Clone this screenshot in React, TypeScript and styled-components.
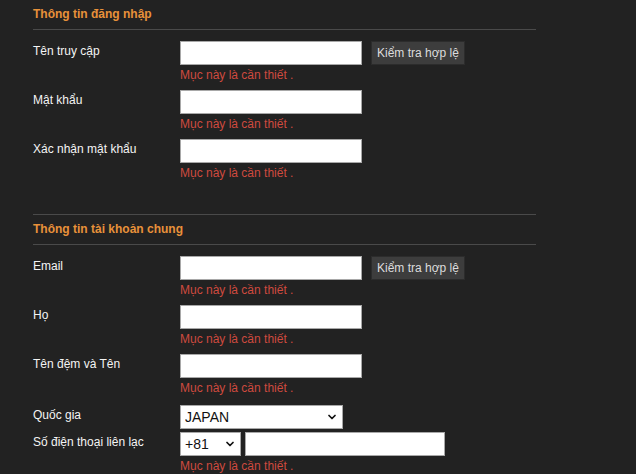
import React from 'react'
import styled, { createGlobalStyle } from 'styled-components'
import { ChevronDown } from 'lucide-react'

const GlobalStyle = createGlobalStyle`
  html, body {
    margin: 0;
    padding: 0;
    background: #222222;
  }
  body {
    font-family: "Liberation Sans", Arial, sans-serif;
    font-size: 12px;
    color: #f0f0f0;
  }
`

const Page = styled.div`
  min-height: 474px;
  padding: 0 0 0 33px;
  background: #222222;
`

const Form = styled.div`
  width: 503px;
`

const Section = styled.section<{ $first?: boolean }>`
  border-top: ${p => (p.$first ? 'none' : '1px solid #4a4a4a')};
  margin-bottom: 33px;
`

const SectionTitle = styled.h3`
  margin: 0;
  padding: 6px 0 7px;
  line-height: 16px;
  font-size: 12px;
  font-weight: bold;
  color: #e8913a;
  border-bottom: 1px solid #4a4a4a;
`

const Rows = styled.div`
  padding-top: 11px;
`

const Row = styled.div<{ $tight?: boolean }>`
  display: grid;
  grid-template-columns: 147px 1fr;
  padding-top: ${p => (p.$tight ? '2px' : '0')};
  margin-bottom: ${p => (p.$tight ? '3px' : '7px')};
`

const Label = styled.label`
  padding-top: 2px;
  line-height: 16px;
  color: #f4f4f4;
`

const Field = styled.div`
  display: flex;
  flex-direction: column;
`

const Line = styled.div`
  display: flex;
  align-items: center;
  gap: 9px;
`

const TextInput = styled.input<{ $w?: number }>`
  box-sizing: border-box;
  width: ${p => p.$w ?? 182}px;
  height: 24px;
  margin: 0;
  border: 1px solid #a8a8a8;
  background: #ffffff;
  font: 13px "Liberation Sans", Arial, sans-serif;
  padding: 0 4px;
  outline: none;
`

const CheckButton = styled.button`
  box-sizing: border-box;
  height: 24px;
  padding: 0 5px;
  border: 1px solid #2c2c2c;
  background: #3d3d3d;
  color: #dcdcdc;
  font: 12px "Liberation Sans", Arial, sans-serif;
  cursor: pointer;
`

const Error = styled.div`
  margin-top: 2px;
  line-height: 16px;
  color: #cf4a3f;
`

const SelectWrap = styled.div<{ $w: number }>`
  position: relative;
  width: ${p => p.$w}px;
  height: 24px;

  & > svg {
    position: absolute;
    right: 5px;
    top: 6px;
    pointer-events: none;
    color: #111;
  }
`

const Select = styled.select`
  box-sizing: border-box;
  width: 100%;
  height: 100%;
  margin: 0;
  appearance: none;
  border: 1px solid #a8a8a8;
  background: #ffffff;
  color: #111;
  font: 14px "Liberation Sans", Arial, sans-serif;
  padding: 0 4px;
  outline: none;
`

const PhoneLine = styled.div`
  display: flex;
  gap: 4px;
`

const REQUIRED = 'Mục này là cần thiết .'

function InputRow({ label, button }: { label: string; button?: boolean }) {
  return (
    <Row>
      <Label>{label}</Label>
      <Field>
        <Line>
          <TextInput type="text" />
          {button && <CheckButton>Kiểm tra hợp lệ</CheckButton>}
        </Line>
        <Error>{REQUIRED}</Error>
      </Field>
    </Row>
  )
}

export default function App() {
  return (
    <Page>
      <GlobalStyle />
      <Form>
        <Section $first>
          <SectionTitle>Thông tin đăng nhập</SectionTitle>
          <Rows>
            <InputRow label="Tên truy cập" button />
            <InputRow label="Mật khẩu" />
            <InputRow label="Xác nhận mật khẩu" />
          </Rows>
        </Section>

        <Section>
          <SectionTitle>Thông tin tài khoản chung</SectionTitle>
          <Rows>
            <InputRow label="Email" button />
            <InputRow label="Họ" />
            <InputRow label="Tên đệm và Tên" />
            <Row $tight>
              <Label>Quốc gia</Label>
              <SelectWrap $w={163}>
                <Select defaultValue="JP">
                  <option value="JP">JAPAN</option>
                </Select>
                <ChevronDown size={12} strokeWidth={3.5} />
              </SelectWrap>
            </Row>
            <Row>
              <Label>Số điện thoại liên lạc</Label>
              <Field>
                <PhoneLine>
                  <SelectWrap $w={61}>
                    <Select defaultValue="81">
                      <option value="81">+81</option>
                    </Select>
                    <ChevronDown size={12} strokeWidth={3.5} />
                  </SelectWrap>
                  <TextInput type="text" $w={200} />
                </PhoneLine>
                <Error>{REQUIRED}</Error>
              </Field>
            </Row>
          </Rows>
        </Section>
      </Form>
    </Page>
  )
}
